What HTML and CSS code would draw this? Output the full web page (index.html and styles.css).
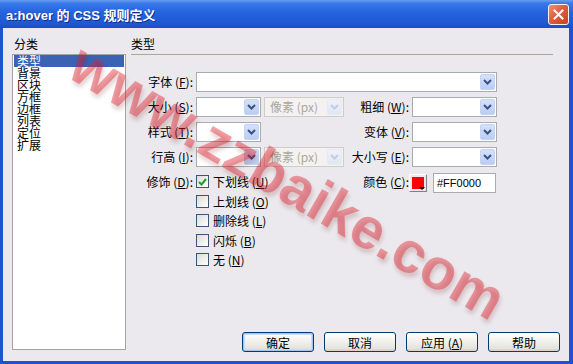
FILE: index.html
```html
<!DOCTYPE html>
<html lang="zh-CN">
<head>
    <meta charset="UTF-8">
    <title>a:hover 的 CSS 规则定义</title>
    <link rel="stylesheet" href="styles.css">
</head>
<body>
    <div class="dialog">
        <!-- Title bar -->
        <div class="titlebar">
            <span class="title">a:hover 的 CSS 规则定义</span>
            <span class="close">
                <svg width="11" height="11" viewBox="0 0 11 11"><path d="M1.5 1.5l8 8M9.5 1.5l-8 8" stroke="#fff" stroke-width="2" stroke-linecap="square"/></svg>
            </span>
        </div>

        <div class="content">
            <!-- Left: category list -->
            <div class="left-col">
                <div class="caption">分类</div>
                <ul class="listbox">
                    <li class="selected">类型</li>
                    <li>背景</li>
                    <li>区块</li>
                    <li>方框</li>
                    <li>边框</li>
                    <li>列表</li>
                    <li>定位</li>
                    <li>扩展</li>
                </ul>
            </div>

            <!-- Right: type settings -->
            <div class="right-col">
                <div class="section-head">类型</div>

                <div class="form">
                    <div class="lbl">字体 (<u>F</u>):</div>
                    <div class="combo span3"><span class="combo-text"></span><span class="drop"><svg width="9" height="6" viewBox="0 0 9 6"><path d="M1 1l3.5 3.5L8 1" fill="none" stroke="#3d5180" stroke-width="2"/></svg></span></div>

                    <div class="lbl">大小 (<u>S</u>):</div>
                    <div class="pair">
                        <div class="combo w65"><span class="combo-text"></span><span class="drop"><svg width="9" height="6" viewBox="0 0 9 6"><path d="M1 1l3.5 3.5L8 1" fill="none" stroke="#3d5180" stroke-width="2"/></svg></span></div>
                        <div class="combo w80 off"><span class="combo-text">像素 (px)</span><span class="drop"><svg width="9" height="6" viewBox="0 0 9 6"><path d="M1 1l3.5 3.5L8 1" fill="none" stroke="#c3cce0" stroke-width="2"/></svg></span></div>
                    </div>
                    <div class="lbl">粗细 (<u>W</u>):</div>
                    <div class="combo"><span class="combo-text"></span><span class="drop"><svg width="9" height="6" viewBox="0 0 9 6"><path d="M1 1l3.5 3.5L8 1" fill="none" stroke="#3d5180" stroke-width="2"/></svg></span></div>

                    <div class="lbl">样式 (<u>T</u>):</div>
                    <div class="pair">
                        <div class="combo w65"><span class="combo-text"></span><span class="drop"><svg width="9" height="6" viewBox="0 0 9 6"><path d="M1 1l3.5 3.5L8 1" fill="none" stroke="#3d5180" stroke-width="2"/></svg></span></div>
                    </div>
                    <div class="lbl">变体 (<u>V</u>):</div>
                    <div class="combo"><span class="combo-text"></span><span class="drop"><svg width="9" height="6" viewBox="0 0 9 6"><path d="M1 1l3.5 3.5L8 1" fill="none" stroke="#3d5180" stroke-width="2"/></svg></span></div>

                    <div class="lbl">行高 (<u>I</u>):</div>
                    <div class="pair">
                        <div class="combo w65"><span class="combo-text"></span><span class="drop"><svg width="9" height="6" viewBox="0 0 9 6"><path d="M1 1l3.5 3.5L8 1" fill="none" stroke="#3d5180" stroke-width="2"/></svg></span></div>
                        <div class="combo w80 off"><span class="combo-text">像素 (px)</span><span class="drop"><svg width="9" height="6" viewBox="0 0 9 6"><path d="M1 1l3.5 3.5L8 1" fill="none" stroke="#c3cce0" stroke-width="2"/></svg></span></div>
                    </div>
                    <div class="lbl">大小写 (<u>E</u>):</div>
                    <div class="combo"><span class="combo-text"></span><span class="drop"><svg width="9" height="6" viewBox="0 0 9 6"><path d="M1 1l3.5 3.5L8 1" fill="none" stroke="#3d5180" stroke-width="2"/></svg></span></div>

                    <div class="lbl">修饰 (<u>D</u>):</div>
                    <div class="checks">
                        <label class="check"><span class="box"><svg width="9" height="8" viewBox="0 0 9 8"><path d="M1 4l2.5 2.5L8 1" fill="none" stroke="#21a121" stroke-width="2"/></svg></span><span>下划线 (<u>U</u>)</span></label>
                        <label class="check"><span class="box"></span><span>上划线 (<u>O</u>)</span></label>
                        <label class="check"><span class="box"></span><span>删除线 (<u>L</u>)</span></label>
                        <label class="check"><span class="box"></span><span>闪烁 (<u>B</u>)</span></label>
                        <label class="check"><span class="box"></span><span>无 (<u>N</u>)</span></label>
                    </div>
                    <div class="lbl">颜色 (<u>C</u>):</div>
                    <div class="color-group">
                        <span class="swatch"><span class="swatch-fill"></span></span>
                        <span class="color-input">#FF0000</span>
                    </div>
                </div>

                <!-- Dialog buttons -->
                <div class="buttons">
                    <button class="btn default">确定</button>
                    <button class="btn">取消</button>
                    <button class="btn">应用 (<u>A</u>)</button>
                    <button class="btn">帮助</button>
                </div>
            </div>
        </div>

        <!-- Site watermark over the screenshot -->
        <div class="watermark">www.zzbaike.com</div>
    </div>
</body>
</html>
```

FILE: styles.css
```css
body {
    margin: 0;
    font-family: "Noto Sans CJK SC", sans-serif;
    font-size: 12px;
    color: #000;
}

.dialog {
    position: relative;
    width: 573px;
    height: 364px;
    display: flex;
    flex-direction: column;
    background-color: #1f52cc;
    overflow: hidden;
}

.titlebar {
    height: 28px;
    display: flex;
    align-items: center;
    justify-content: space-between;
    padding: 0 4px 0 6px;
    background: linear-gradient(#6b9cf1 0%, #3778ea 12%, #2563dd 45%, #1f59d6 80%, #1a4fc4 100%);
}

.title {
    color: #fff;
    font-family: "Liberation Sans", "Noto Sans CJK SC", sans-serif;
    font-weight: bold;
    font-size: 13px;
    text-shadow: 1px 1px 0 #0d2f8a;
}

.close {
    width: 19px;
    height: 19px;
    display: flex;
    align-items: center;
    justify-content: center;
    border: 1px solid #f3f3f3;
    border-radius: 3px;
    background: linear-gradient(135deg, #ec9276 0%, #df5d3b 45%, #c8431f 100%);
}

.content {
    flex: 1;
    display: flex;
    gap: 5px;
    margin: 0 4px 3px 3px;
    padding: 10px 9px 9px 9px;
    background-color: #ebe9ed;
}

.left-col {
    width: 114px;
    display: flex;
    flex-direction: column;
}

.caption {
    line-height: 12px;
    padding-left: 2px;
}

.listbox {
    list-style: none;
    margin: 4px 0 0 0;
    padding: 0 1px;
    height: 296px;
    box-sizing: border-box;
    background-color: #fff;
    border: 1px solid #a3a3a3;
}

.listbox li {
    line-height: 12px;
    height: 12px;
    padding-left: 3px;
}

.listbox li.selected {
    background-color: #3a63b4;
    color: #fff;
}

.right-col {
    flex: 1;
    display: flex;
    flex-direction: column;
}

.section-head {
    line-height: 12px;
    padding-bottom: 4px;
    margin-right: 7px;
    border-bottom: 1px solid #aca899;
}

.form {
    display: grid;
    grid-template-columns: 63px 148px 68px 85px;
    grid-template-rows: repeat(4, 20px) auto;
    row-gap: 5px;
    margin-top: 17px;
    margin-left: 2px;
}

.lbl {
    text-align: right;
    padding-right: 3px;
    line-height: 20px;
    white-space: nowrap;
}

u {
    text-decoration: underline;
}

.combo {
    display: flex;
    height: 20px;
    box-sizing: border-box;
    background-color: #fff;
    border: 1px solid #a5acb2;
}

.combo.span3 {
    grid-column: 2 / span 3;
}

.combo.w65 {
    width: 65px;
}

.combo.w80 {
    width: 80px;
}

.combo-text {
    flex: 1;
    padding-left: 5px;
    line-height: 18px;
    white-space: nowrap;
}

.drop {
    width: 15px;
    margin: 1px;
    display: flex;
    align-items: center;
    justify-content: center;
    border-radius: 2px;
    background: linear-gradient(#d5e1fb, #b9cdf4);
    border: 1px solid #c4d3f3;
    box-sizing: border-box;
}

.combo.off {
    background-color: #f3f2f1;
    border-color: #cfcdc5;
    color: #aca899;
}

.combo.off .drop {
    background: linear-gradient(#eef1f8, #e1e7f3);
    border-color: #e6eaf4;
}

.pair {
    display: flex;
    gap: 3px;
}

.checks {
    display: flex;
    flex-direction: column;
}

.check {
    height: 19.5px;
    display: flex;
    align-items: center;
    gap: 4px;
    white-space: nowrap;
}

.box {
    width: 13px;
    height: 13px;
    box-sizing: border-box;
    border: 1px solid #3e5672;
    background: linear-gradient(135deg, #dcdcd7, #fff);
    display: flex;
    align-items: center;
    justify-content: center;
}

.color-group {
    display: flex;
    align-items: center;
    gap: 6px;
    margin-left: -3px;
    margin-top: 1px;
    height: 20px;
}

.swatch {
    position: relative;
    width: 18px;
    height: 18px;
    box-sizing: border-box;
    border: 1px solid;
    border-color: #fff #808080 #808080 #fff;
    background-color: #ebe9ed;
    display: flex;
    padding: 2px;
}

.swatch-fill {
    flex: 1;
    background-color: #ff0000;
}

.swatch::after {
    content: "";
    position: absolute;
    right: 1px;
    bottom: 1px;
    border-left: 3px solid transparent;
    border-right: 3px solid transparent;
    border-top: 3px solid #000;
}

.color-input {
    width: 63px;
    height: 20px;
    box-sizing: border-box;
    border: 1px solid #a5acb2;
    background-color: #fff;
    padding-left: 3px;
    line-height: 18px;
    font-family: "Liberation Sans", sans-serif;
    font-size: 11px;
}

.buttons {
    margin-top: auto;
    display: flex;
    justify-content: flex-end;
    gap: 10px;
}

.btn {
    width: 72px;
    height: 20px;
    padding: 0;
    font-family: "Noto Sans CJK SC", sans-serif;
    font-size: 12px;
    color: #000;
    border: 1px solid #003c74;
    border-radius: 3px;
    background: linear-gradient(#ffffff 0%, #f4f3ee 40%, #e6e3dc 85%, #d6d0c5 100%);
}

.btn.default {
    box-shadow: inset 0 0 0 1px #a8c4ee, inset 0 0 0 2px #cbdcf7;
}

.watermark {
    position: absolute;
    left: 288px;
    top: 181px;
    transform: translate(-50%, -50%) rotate(30deg);
    white-space: nowrap;
    pointer-events: none;
    font-family: "Liberation Sans", sans-serif;
    font-weight: bold;
    font-size: 58px;
    color: rgba(226, 30, 45, 0.42);
    text-shadow: 3px 3px 4px rgba(110, 0, 0, 0.18);
}
```
